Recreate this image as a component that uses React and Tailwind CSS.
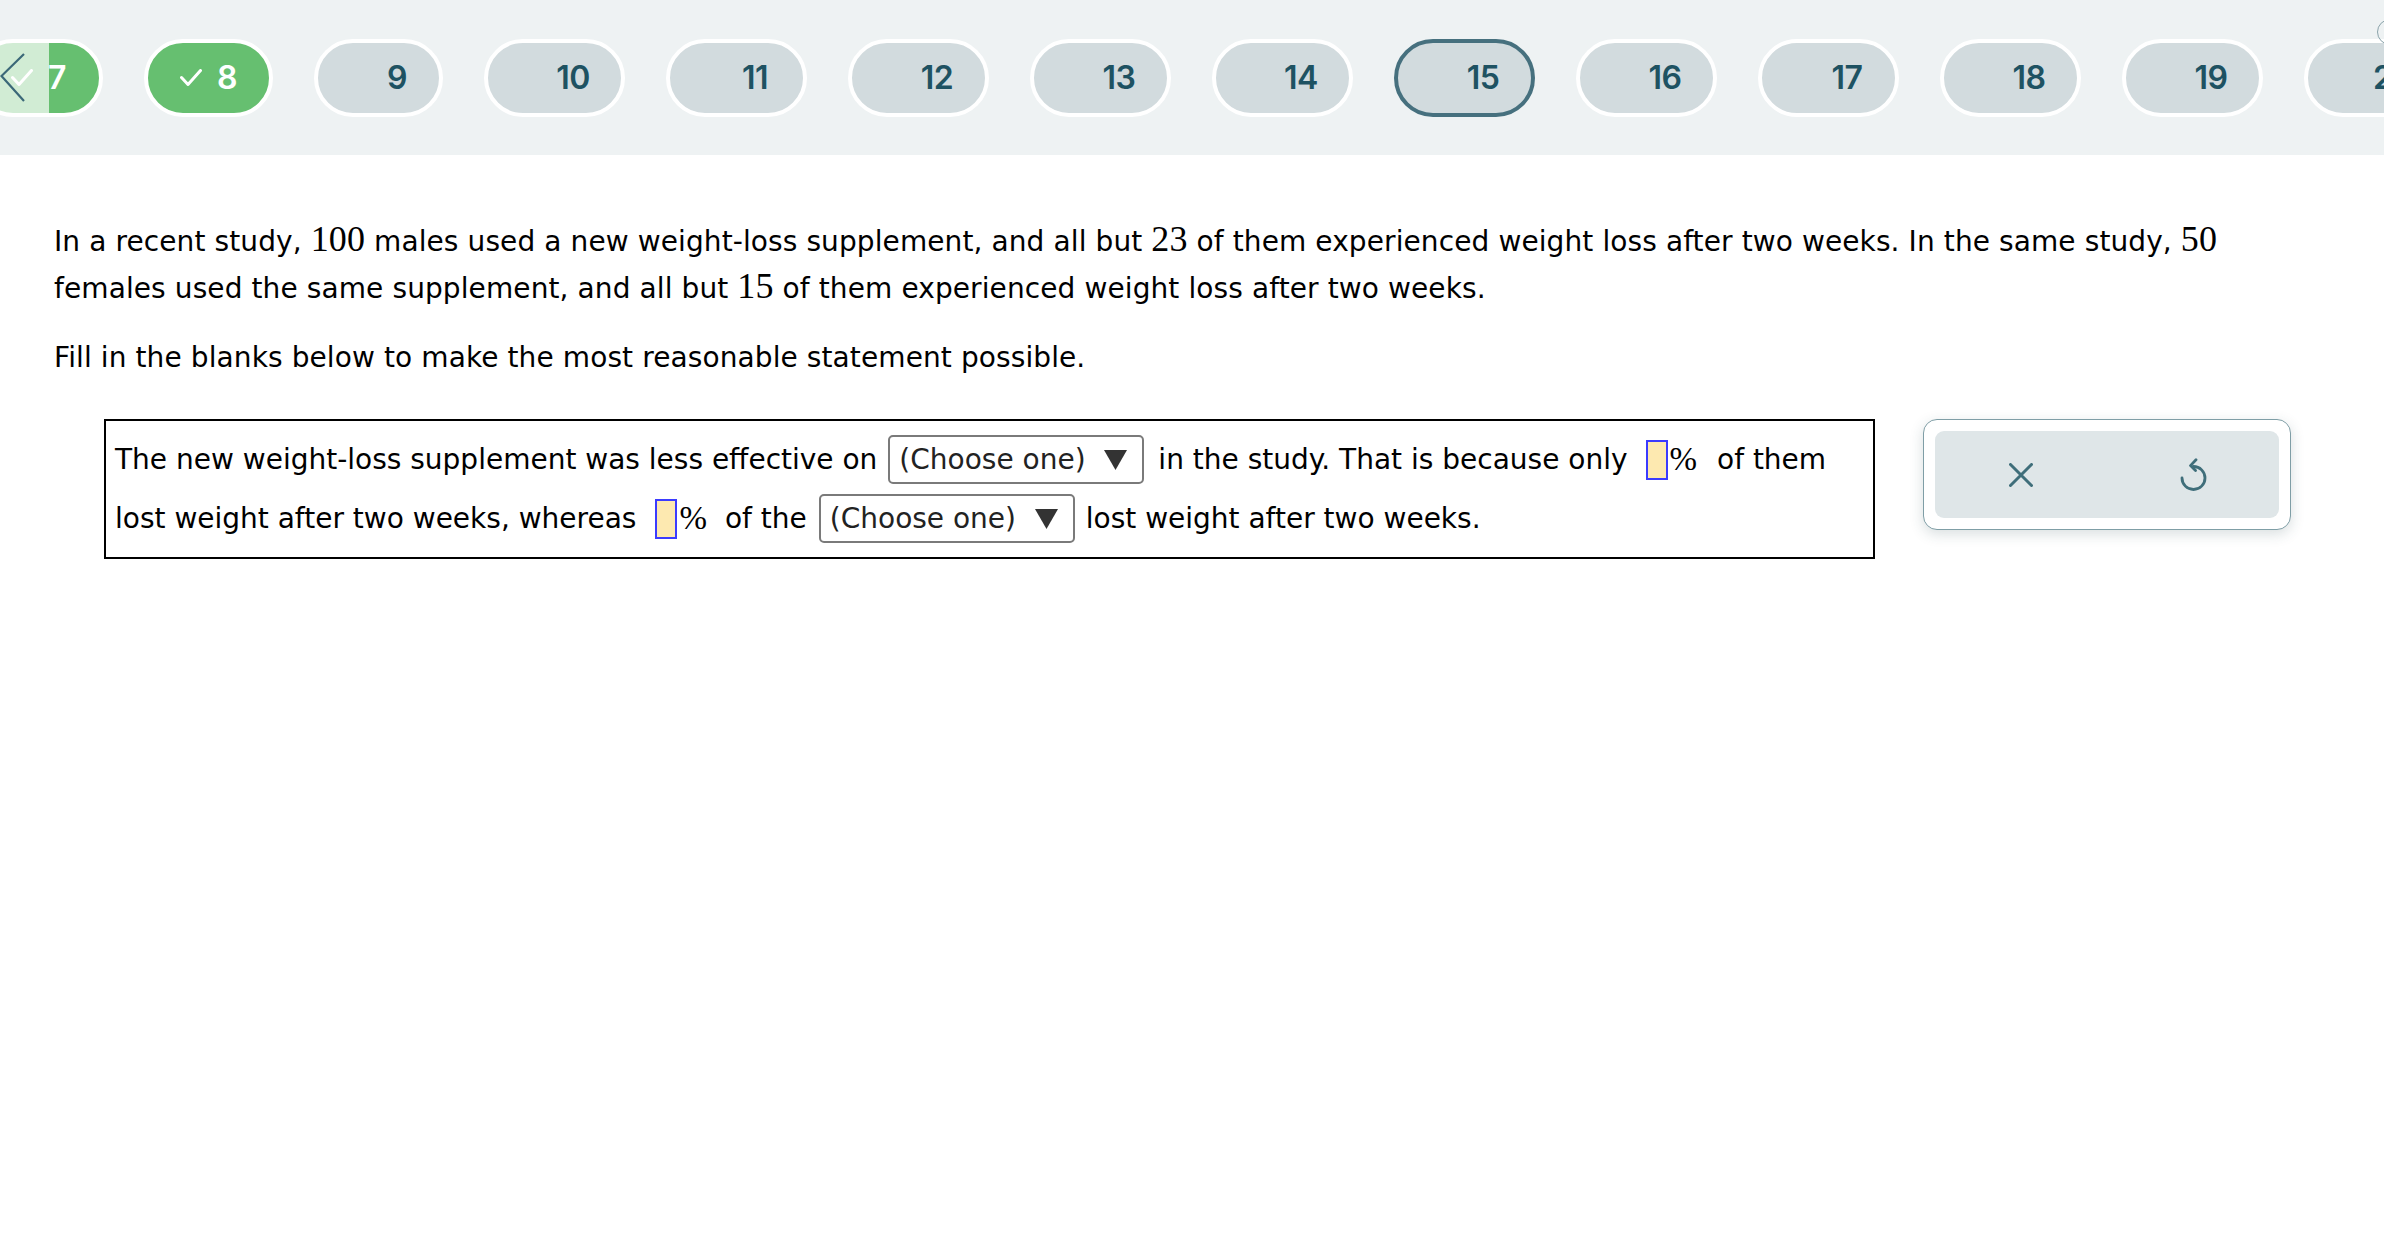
import React from "react";

// question nav pills: done = green w/ check, current = outlined
const pills = [
  { n: 7, wide: false, state: "done" },
  { n: 8, wide: false, state: "done" },
  { n: 9, wide: false, state: "todo" },
  { n: 10, wide: true, state: "todo" },
  { n: 11, wide: true, state: "todo" },
  { n: 12, wide: true, state: "todo" },
  { n: 13, wide: true, state: "todo" },
  { n: 14, wide: true, state: "todo" },
  { n: 15, wide: true, state: "current" },
  { n: 16, wide: true, state: "todo" },
  { n: 17, wide: true, state: "todo" },
  { n: 18, wide: true, state: "todo" },
  { n: 19, wide: true, state: "todo" },
  { n: 20, wide: true, state: "todo" },
];

function Check({ show }) {
  return (
    <svg
      width="22"
      height="17"
      viewBox="0 0 22 17"
      className={show ? "shrink-0" : "shrink-0 invisible"}
    >
      <polyline
        points="1.5,8.5 8,15.5 20.5,1.5"
        fill="none"
        stroke="#ffffff"
        strokeWidth="3"
        strokeLinecap="round"
        strokeLinejoin="round"
      />
    </svg>
  );
}

function Pill({ n, wide, state }) {
  const width = wide ? "w-[141px]" : "w-[129px]";
  let look = "bg-[#d2dbde] border-white text-[#1e5262]";
  if (state === "done") look = "bg-[#66bf70] border-white text-white";
  if (state === "current") look = "bg-[#d2dbde] border-[#46707e] text-[#1e5262]";

  return (
    <div
      className={`relative flex shrink-0 items-center justify-center h-[78px] rounded-full border-4 ${width} ${look}`}
    >
      <Check show={state === "done"} />
      <span className="ml-[15px] font-['Inter',sans-serif] text-[32px] leading-none font-semibold tracking-[-0.5px]">
        {n}
      </span>
    </div>
  );
}

function Num({ children }) {
  return (
    <span className="font-['Liberation_Serif',serif] text-[36px] leading-none">{children}</span>
  );
}

function Choose({ className }) {
  return (
    <div
      className={`flex shrink-0 items-center justify-between w-[256px] h-[49px] pl-[9px] pr-[15px] border-2 border-[#7a7a7a] rounded-[5px] bg-white text-[#222] ${className}`}
    >
      <span>(Choose one)</span>
      <svg width="23" height="20" viewBox="0 0 23 20">
        <polygon points="0,0 23,0 11.5,20" fill="#333333" />
      </svg>
    </div>
  );
}

function Blank({ className }) {
  return (
    <div
      className={`shrink-0 w-[22px] h-[40px] border-2 border-[#3b3bff] bg-[#fde9b0] ${className}`}
    />
  );
}

export default function App() {
  return (
    <div className="min-h-screen bg-white font-['DejaVu_Sans',sans-serif] text-black">
      {/* top nav */}
      <div className="relative h-[155px] bg-[#eef2f3] overflow-hidden">
        <div className="flex items-center h-full gap-[41px] ml-[-26px]">
          {pills.map((p) => (
            <Pill key={p.n} {...p} />
          ))}
        </div>

        {/* previous arrow overlay */}
        <div className="absolute left-0 top-[41px] w-[49px] h-[74px] bg-white/70 flex items-center">
          <svg width="26" height="50" viewBox="0 0 26 50">
            <polyline
              points="24,1 1.5,23 24,48"
              fill="none"
              stroke="#3b6878"
              strokeWidth="2.2"
            />
          </svg>
        </div>
        <div className="absolute left-[2377px] top-[19px] w-[26px] h-[26px] rounded-full border-[1.5px] border-[#8aa3aa]" />
      </div>

      {/* question */}
      <div className="pl-[54px] pt-[63px] text-[28px] leading-[47px]">
        <p className="tracking-[0.1px]">
          In a recent study, <Num>100</Num> males used a new weight-loss supplement,
          and all but <Num>23</Num> of them experienced weight loss after two weeks. In
          the same study, <Num>50</Num>
          <br />
          females used the same supplement, and all but <Num>15</Num> of them
          experienced weight loss after two weeks.
        </p>
        <p className="mt-[22px] tracking-[0.1px]">
          Fill in the blanks below to make the most reasonable statement possible.
        </p>

        <div className="flex items-start mt-[38px]">
          <div className="ml-[50px] w-[1771px] border-2 border-black pl-[9px] pt-[14px] pb-[14px] flex flex-col gap-[10px]">
            <div className="flex items-center h-[49px] whitespace-nowrap">
              <span>The new weight-loss supplement was less effective on</span>
              <Choose className="ml-[11px]" />
              <span className="ml-[14px]">in the study. That is because only</span>
              <Blank className="ml-[18px]" />
              <span className="ml-[2px] font-['Liberation_Serif',serif] text-[33px]">%</span>
              <span className="ml-[20px]">of them</span>
            </div>
            <div className="flex items-center h-[49px] whitespace-nowrap">
              <span>lost weight after two weeks, whereas</span>
              <Blank className="ml-[19px]" />
              <span className="ml-[2px] font-['Liberation_Serif',serif] text-[33px]">%</span>
              <span className="ml-[18px]">of the</span>
              <Choose className="ml-[12px]" />
              <span className="ml-[11px]">lost weight after two weeks.</span>
            </div>
          </div>

          {/* clear / reset panel */}
          <div className="ml-[48px] w-[368px] h-[111px] p-[11px] rounded-[14px] border-[1.5px] border-[#7f9ea6] bg-white shadow-[0_4px_14px_rgba(40,70,80,0.18)]">
            <div className="grid grid-cols-2 h-full rounded-[9px] bg-[#dfe6e8]">
              <div className="flex items-center justify-center">
                <svg width="24" height="24" viewBox="0 0 24 24">
                  <path
                    d="M1.5 1.5 L22.5 22.5 M22.5 1.5 L1.5 22.5"
                    stroke="#3f6e7a"
                    strokeWidth="3"
                    strokeLinecap="round"
                    fill="none"
                  />
                </svg>
              </div>
              <div className="flex items-center justify-center">
                <svg width="27" height="33" viewBox="0 0 27 33">
                  <path
                    d="M13.5 8.5 A11.5 11.5 0 1 1 2 20"
                    stroke="#3f6e7a"
                    strokeWidth="2.8"
                    strokeLinecap="round"
                    fill="none"
                  />
                  <polyline
                    points="16,1.8 10.5,7.6 15.5,12.5"
                    stroke="#3f6e7a"
                    strokeWidth="2.8"
                    strokeLinecap="round"
                    strokeLinejoin="round"
                    fill="none"
                  />
                </svg>
              </div>
            </div>
          </div>
        </div>
      </div>
    </div>
  );
}
